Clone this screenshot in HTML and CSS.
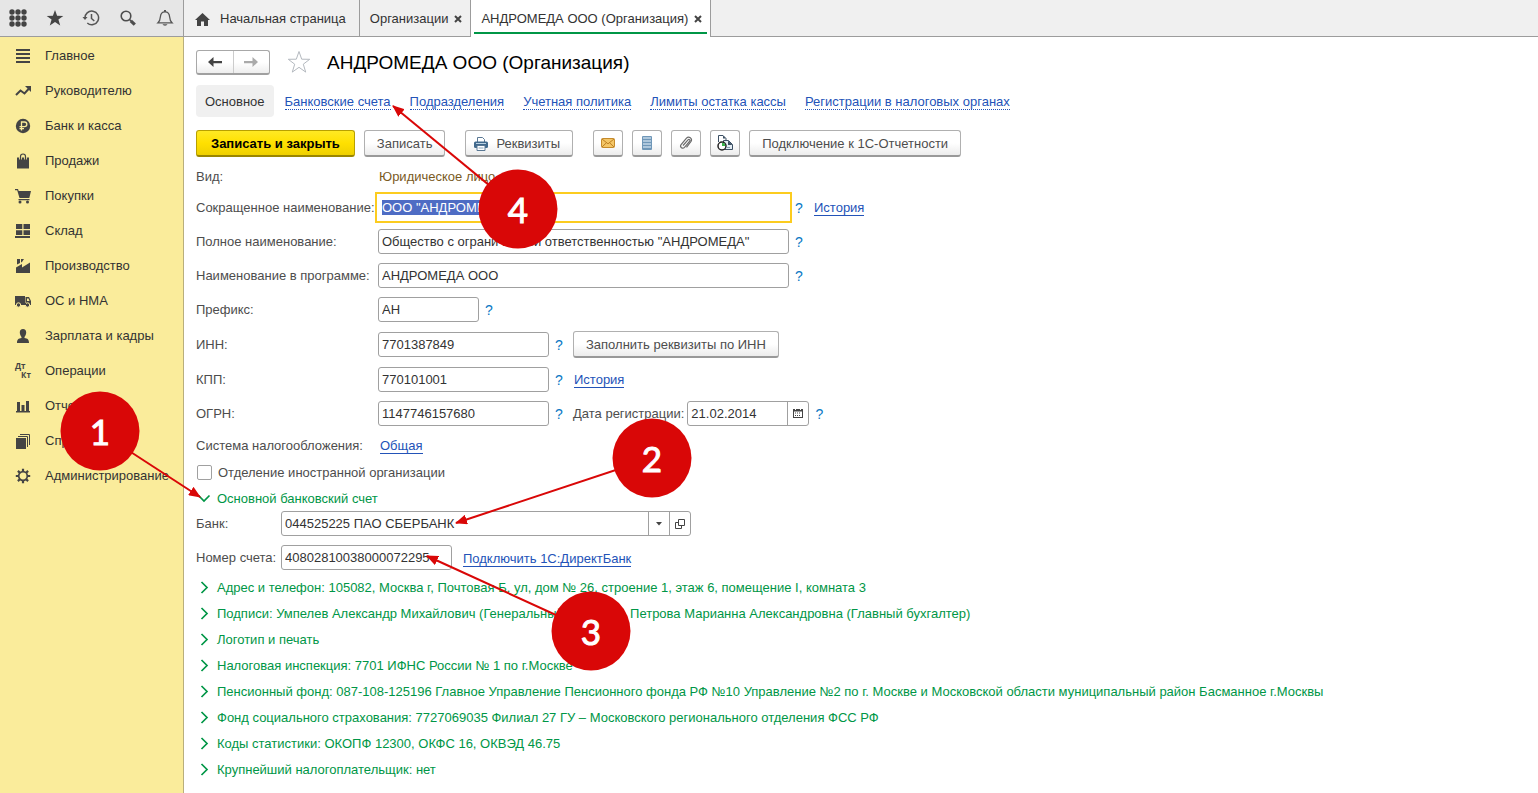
FILE: index.html
```html
<!DOCTYPE html>
<html lang="ru">
<head>
<meta charset="utf-8">
<meta name="viewport" content="width=device-width, initial-scale=1">
<title>АНДРОМЕДА ООО (Организация)</title>
<link rel="stylesheet" href="styles.css">
</head>
<body>
<div class="app">
  <header class="topbar">
    <div class="tools">
      <button class="tool" aria-label="Меню"><svg width="18" height="18" viewBox="0 0 18 18" fill="#444"><circle cx="3" cy="3" r="2.7"/><circle cx="9" cy="3" r="2.7"/><circle cx="15" cy="3" r="2.7"/><circle cx="3" cy="9" r="2.7"/><circle cx="9" cy="9" r="2.7"/><circle cx="15" cy="9" r="2.7"/><circle cx="3" cy="15" r="2.7"/><circle cx="9" cy="15" r="2.7"/><circle cx="15" cy="15" r="2.7"/></svg></button>
      <button class="tool" aria-label="Избранное"><svg width="18" height="18" viewBox="0 0 18 18" fill="#444"><path d="M9 1l2.1 5.700 6.200.2-4.900 3.700 1.800 5.900L9 13l-5.200 3.500 1.800-5.900L.7 6.900l6.200-.2z"/></svg></button>
      <button class="tool" aria-label="История"><svg width="18" height="18" viewBox="0 0 18 18" fill="none" stroke="#555" stroke-width="1.500"><path d="M3 9.500A6.800 6.800 0 1 1 5.300 14"/><path d="M9.500 5v4.500l2.800 2.500"/><path d="M.5 8h5L3 11z" fill="#555" stroke="none"/></svg></button>
      <button class="tool" aria-label="Поиск"><svg width="18" height="18" viewBox="0 0 18 18" fill="none" stroke="#4d4d4d"><circle cx="7" cy="7" r="4.800" stroke-width="1.600"/><path d="M10.500 10.500l1.500 1.500" stroke-width="1.600"/><path d="M11.800 11.800l4 3.800" stroke-width="3.200"/></svg></button>
      <button class="tool" aria-label="Уведомления"><svg width="18" height="18" viewBox="0 0 18 18" fill="none" stroke="#555" stroke-width="1.300"><path d="M2 13.800c2-1.800 2.200-3.300 2.400-6C4.600 4.600 6.300 2.800 9 2.800s4.400 1.800 4.600 5c.2 2.700.4 4.200 2.400 6z"/><path d="M9 1v2" stroke-width="2"/><path d="M6.500 15.200a2.600 2 0 0 0 5 0z" fill="#555" stroke="none"/></svg></button>
    </div>
    <nav class="tabs" aria-label="Открытые окна">
      <a class="tab tab-home" href="#"><svg width="15" height="13" viewBox="0 0 15 13" fill="#444"><path d="M7.500 0L15 7h-2v6H9V8.500H6V13H2V7H0z"/></svg>Начальная страница</a>
      <div class="tab"><a href="#">Организации</a><button class="close" aria-label="Закрыть Организации"><svg width="8" height="8" viewBox="0 0 8 8"><path d="M1 1l6 6M7 1L1 7"/></svg></button></div>
      <div class="tab tab-active"><a href="#">АНДРОМЕДА ООО (Организация)</a><button class="close" aria-label="Закрыть АНДРОМЕДА"><svg width="8" height="8" viewBox="0 0 8 8"><path d="M1 1l6 6M7 1L1 7"/></svg></button></div>
    </nav>
  </header>

  <div class="body">
    <nav class="sidebar" aria-label="Разделы">
      <a href="#"><svg viewBox="0 0 16 16"><path d="M1 1h14v2H1zM1 5h14v2H1zM1 9h14v2H1zM1 13h14v2H1z"/></svg>Главное</a>
      <a href="#"><svg viewBox="0 0 16 16"><path d="M1 12l4.500-4.500 4 3L14 5.500" fill="none" stroke="#444" stroke-width="2"/><path d="M10 3h6v6z"/></svg>Руководителю</a>
      <a href="#"><svg viewBox="0 0 16 16"><circle cx="8" cy="8" r="7.200"/><path d="M6.500 12.500V4H9.500a2.300 2.300 0 0 1 0 4.700H4.500M4.500 10.700H9" fill="none" stroke="#faec9b" stroke-width="1.300"/></svg>Банк и касса</a>
      <a href="#"><svg viewBox="0 0 16 16"><path d="M2 4.500h12v11H2z"/><path d="M5.500 6.500V3.500Q5.500 1 8 1t2.500 2.500v3" fill="none" stroke="#faec9b" stroke-width="2.800"/><path d="M5.500 7V3.500Q5.500 1 8 1t2.500 2.500V7" fill="none" stroke="#444" stroke-width="1.200"/></svg>Продажи</a>
      <a href="#"><svg viewBox="0 0 16 16"><path d="M0 1h3l.7 2H16l-1.700 7H4.500L2.200 2.200H0zM3.500 11h11v1.300h-11z"/><circle cx="5" cy="14" r="1.500"/><circle cx="12.500" cy="14" r="1.500"/></svg>Покупки</a>
      <a href="#"><svg viewBox="0 0 16 16"><path d="M1 1h6.300v5H1zM8.500 1h6.500v5H8.500zM1 7.200h6.300v4.800H1zM8.500 7.200h6.500v4.800H8.500zM0 13h15v2H0z"/></svg>Склад</a>
      <a href="#"><svg viewBox="0 0 16 16"><path d="M1 15V9.500L7 6v3.500L15 4.500V15z"/><path d="M2 1h3v4L2 6.500zM6 1h3L7 4 6 4.500z"/></svg>Производство</a>
      <a href="#"><svg viewBox="0 0 16 16"><path d="M0 3h10v9H0zM10.500 4H14l2 4v4h-5.500z"/><path d="M12 5.500h1.500l1 2.500H12z" fill="#faec9b"/><circle cx="3.500" cy="12" r="2.200" stroke="#faec9b"/><circle cx="12.500" cy="12" r="2.200" stroke="#faec9b"/><path d="M9 10h2v2H9z"/></svg>ОС и НМА</a>
      <a href="#"><svg viewBox="0 0 16 16"><path d="M8 1c2.200 0 3.200 1.500 3.200 3.500S10 8.500 9.500 9v1c3 .3 4.500 1.500 4.500 5H2c0-3.500 1.500-4.700 4.500-5V9C6 8.500 4.800 6.500 4.800 4.500S5.800 1 8 1z"/></svg>Зарплата и кадры</a>
      <a href="#"><svg viewBox="0 0 16 16" class="dtkt"><text x="0" y="6">Дт</text><text x="6" y="15">Кт</text></svg>Операции</a>
      <a href="#"><svg viewBox="0 0 16 16"><path d="M1 13h14v1.500H1zM2 4h3v9H2zM6.500 7h3v6h-3zM11 3h3v10h-3z"/></svg>Отчеты</a>
      <a href="#"><svg viewBox="0 0 16 16"><path d="M1 5h10v11H1z"/><path d="M3 3.500h9.500V14M5 1.500h9.500V12" fill="none" stroke="#444"/></svg>Справочники</a>
      <a href="#"><svg viewBox="0 0 16 16" fill="none" stroke="#444"><circle cx="8" cy="8" r="4.300" fill="none" stroke-width="1.700"/><path d="M8 .8v2.700M8 12.500v2.700M.8 8h2.700M12.500 8h2.700M2.900 2.900l1.900 1.900M11.200 11.200l1.900 1.900M2.900 13.100l1.900-1.900M11.200 4.800l1.900-1.900" stroke-width="2.200"/></svg>Администрирование</a>
    </nav>

    <main class="content">
      <div class="heading">
        <div class="history-nav">
          <button aria-label="Назад"><svg width="14" height="10" viewBox="0 0 14 10"><path d="M0 5l5.500-5v4H14v2.200H5.500V10z" fill="#444"/></svg></button>
          <button aria-label="Вперед"><svg width="14" height="10" viewBox="0 0 14 10"><path d="M14 5L8.500 0v4H0v2.200h8.500V10z" fill="#aaa"/></svg></button>
        </div>
        <button class="fav" aria-label="В избранное"><svg width="24" height="24" viewBox="0 0 24 24" fill="none" stroke="#b4b9bf"><path d="M12 1.500l2.700 7.700 8 .1-6.400 4.900 2.400 7.900-6.700-4.800-6.700 4.800 2.400-7.900L1.300 9.300l8-.1z"/></svg></button>
        <h1>АНДРОМЕДА ООО (Организация)</h1>
      </div>

      <nav class="subnav" aria-label="Разделы организации">
        <span class="current">Основное</span>
        <div class="sublinks">
          <a href="#">Банковские счета</a>
          <a href="#">Подразделения</a>
          <a href="#">Учетная политика</a>
          <a href="#">Лимиты остатка кассы</a>
          <a href="#">Регистрации в налоговых органах</a>
        </div>
      </nav>

      <div class="commands">
        <div class="group">
          <button class="btn primary">Записать и закрыть</button>
          <button class="btn">Записать</button>
        </div>
        <button class="btn with-icon"><svg width="14" height="14" viewBox="0 0 14 14"><path d="M3.500 5V.5h5l2 2V5" fill="#fff" stroke="#5a7894"/><rect y="4.500" width="14" height="6.500" rx="1.500" fill="#41698c"/><path d="M2 6.500h10" stroke="#b9d0e2"/><path d="M3 8.500h8v5H3z" fill="#fff" stroke="#5a7894"/><path d="M4.500 11h5" stroke="#8aa5bb"/></svg>Реквизиты</button>
        <div class="group">
          <button class="btn icon" aria-label="Письмо"><svg width="14" height="10" viewBox="0 0 14 10"><rect x=".5" y=".5" width="13" height="9" rx="1" fill="#f4c667" stroke="#c58a2b"/><path d="M1 1l6 4.800L13 1M1 9l4.500-4.300M13 9L8.500 4.700" fill="none" stroke="#bd7f21"/></svg></button>
          <button class="btn icon" aria-label="Список"><svg width="10" height="14" viewBox="0 0 10 14"><rect width="10" height="14" rx="1" fill="#6f97b8"/><path d="M1 2h8M1 5h8M1 8h8M1 11h8" stroke="#c3d8e8" stroke-width="1.500"/></svg></button>
          <button class="btn icon" aria-label="Присоединенные файлы"><svg width="14" height="14" viewBox="0 0 14 14" fill="none" stroke="#6b6b6b" stroke-width="1.200"><path d="M4 9.500l5-5.700c1-1 2.600.2 1.700 1.400l-5.200 6.200c-1.800 2-5.200-.3-3.400-2.800L7.500 2.200c2.300-2.600 6.300.3 4.500 3.300L7.500 11.300"/></svg></button>
          <button class="btn icon" aria-label="История документов"><svg width="16" height="16" viewBox="0 0 16 16"><path d="M1.500 7V.5h4.500l3 3V13" fill="#fff" stroke="#3c5064"/><path d="M6.500 5.500h5l4 4v5h-9z" fill="#e4edf4" stroke="#3c5064"/><path d="M11 5.500V10h4.500zM6 .5v3h3z" fill="#3c5064"/><circle cx="5" cy="11" r="4" fill="#fff" stroke="#222" stroke-width="1.500"/><path d="M5 11V7.800A3.200 3.200 0 0 1 8.200 11z" fill="#35b44a"/><path d="M9 12.500h4" stroke="#8ba0b2"/></svg></button>
          <button class="btn">Подключение к 1С-Отчетности</button>
        </div>
      </div>

      <form class="form">
        <div class="row row-kind"><span class="label">Вид:</span><span class="kind">Юридическое лицо</span></div>
        <div class="row"><label class="label" for="short">Сокращенное наименование:</label><input class="field wide focus" id="short" value='ООО "АНДРОМЕДА"'><button type="button" class="help">?</button><a class="link" href="#">История</a></div>
        <div class="row"><label class="label" for="full">Полное наименование:</label><input class="field wide" id="full" value='Общество с ограниченной ответственностью "АНДРОМЕДА"'><button type="button" class="help">?</button></div>
        <div class="row"><label class="label" for="name">Наименование в программе:</label><input class="field wide" id="name" value="АНДРОМЕДА ООО"><button type="button" class="help">?</button></div>
        <div class="row"><label class="label" for="prefix">Префикс:</label><input class="field tiny" id="prefix" value="АН"><button type="button" class="help">?</button></div>
        <div class="row row-inn"><label class="label" for="inn">ИНН:</label><input class="field mid" id="inn" value="7701387849"><button type="button" class="help">?</button><button type="button" class="btn">Заполнить реквизиты по ИНН</button></div>
        <div class="row"><label class="label" for="kpp">КПП:</label><input class="field mid" id="kpp" value="770101001"><button type="button" class="help">?</button><a class="link" href="#">История</a></div>
        <div class="row"><label class="label" for="ogrn">ОГРН:</label><input class="field mid" id="ogrn" value="1147746157680"><button type="button" class="help">?</button><label class="date-label" for="regdate">Дата регистрации:</label><span class="combo date"><input id="regdate" value="21.02.2014"><button type="button" aria-label="Календарь"><svg width="10" height="10" viewBox="0 0 10 10"><path d="M0 1h10v9H0z" fill="#444"/><path d="M1 3.500h8V9H1z" fill="#fff"/><path d="M2 5h6M2 7.500h6" stroke="#444" stroke-dasharray="1 1"/><path d="M2.500 0v2M7.500 0v2" stroke="#fff"/></svg></button></span><button type="button" class="help">?</button></div>
        <div class="row row-tax"><span class="label">Система налогообложения:</span><a class="link tax" href="#">Общая</a></div>
        <label class="check"><input type="checkbox"><span>Отделение иностранной организации</span></label>

        <button type="button" class="section open" aria-expanded="true"><svg width="14" height="14" viewBox="0 0 14 14"><path d="M1.500 4.500l5.500 5.500 5.500-5.500"/></svg><span>Основной банковский счет</span></button>
        <div class="account">
          <div class="account-row"><label for="bank">Банк:</label><span class="combo bank"><input id="bank" value="044525225 ПАО СБЕРБАНК"><button type="button" aria-label="Выбрать"><svg width="6" height="4" viewBox="0 0 6 4"><path d="M0 0h6L3 3.500z" fill="#444"/></svg></button><button type="button" aria-label="Открыть"><svg width="10" height="10" viewBox="0 0 10 10" fill="none" stroke="#444"><path d="M3.500.5h6v6h-6z"/><path d="M3.500 3.500h-3v6h6v-3"/></svg></button></span></div>
          <div class="account-row"><label for="acc">Номер счета:</label><input class="field mid" id="acc" value="40802810038000072295"><a class="link direct" href="#">Подключить 1С:ДиректБанк</a></div>
        </div>

        <button type="button" class="section"><svg width="14" height="14" viewBox="0 0 14 14"><path d="M4.500 2L10 7.500 4.500 13"/></svg><span>Адрес и телефон: 105082, Москва г, Почтовая Б. ул, дом № 26, строение 1, этаж 6, помещение I, комната 3</span></button>
        <button type="button" class="section"><svg width="14" height="14" viewBox="0 0 14 14"><path d="M4.500 2L10 7.500 4.500 13"/></svg><span>Подписи: Умпелев Александр Михайлович (Генеральный директор&nbsp; Петрова Марианна Александровна (Главный бухгалтер)</span></button>
        <button type="button" class="section"><svg width="14" height="14" viewBox="0 0 14 14"><path d="M4.500 2L10 7.500 4.500 13"/></svg><span>Логотип и печать</span></button>
        <button type="button" class="section"><svg width="14" height="14" viewBox="0 0 14 14"><path d="M4.500 2L10 7.500 4.500 13"/></svg><span>Налоговая инспекция: 7701 ИФНС России № 1 по г.Москве</span></button>
        <button type="button" class="section"><svg width="14" height="14" viewBox="0 0 14 14"><path d="M4.500 2L10 7.500 4.500 13"/></svg><span>Пенсионный фонд: 087-108-125196 Главное Управление Пенсионного фонда РФ №10 Управление №2 по г. Москве и Московской области муниципальный район Басманное г.Москвы</span></button>
        <button type="button" class="section"><svg width="14" height="14" viewBox="0 0 14 14"><path d="M4.500 2L10 7.500 4.500 13"/></svg><span>Фонд социального страхования: 7727069035 Филиал 27 ГУ – Московского регионального отделения ФСС РФ</span></button>
        <button type="button" class="section"><svg width="14" height="14" viewBox="0 0 14 14"><path d="M4.500 2L10 7.500 4.500 13"/></svg><span>Коды статистики: ОКОПФ 12300, ОКФС 16, ОКВЭД 46.75</span></button>
        <button type="button" class="section"><svg width="14" height="14" viewBox="0 0 14 14"><path d="M4.500 2L10 7.500 4.500 13"/></svg><span>Крупнейший налогоплательщик: нет</span></button>
      </form>
    </main>
  </div>

  <svg class="callouts" width="720" height="690" viewBox="0 0 720 690">
    <defs><marker id="head" viewBox="0 0 12 10" refX="11" refY="5" markerWidth="12" markerHeight="10" markerUnits="userSpaceOnUse" orient="auto"><path d="M0 0l12 5-12 5z" fill="#d90707"/></marker></defs>
    <g stroke="#d90707" stroke-width="2" marker-end="url(#head)">
      <path d="M100 432L200 497"/>
      <path d="M652 458L456 523"/>
      <path d="M591 631L427 556"/>
      <path d="M518 209L393 106"/>
    </g>
    <g fill="#d90707">
      <circle cx="100" cy="431" r="39.500"/><circle cx="652" cy="458" r="39.500"/><circle cx="591" cy="631" r="39.500"/><circle cx="518" cy="209" r="39.500"/>
    </g>
    <g class="numbers">
      <text x="100" y="445">1</text><text x="652" y="472">2</text><text x="591" y="645">3</text><text x="518" y="223">4</text>
    </g>
  </svg>
</div>
<script src="script.js"></script>
</body>
</html>
```
FILE: styles.css
```css
* { box-sizing: border-box; }
body { margin: 0; background: #fff; color: #4d4d4d; font: 13px/16px "Liberation Sans", Arial, sans-serif; }
button, input { font: inherit; color: inherit; }
button { padding: 0; border: 0; background: none; cursor: pointer; }
svg { flex: none; }
a { color: inherit; text-decoration: none; }
.app { position: relative; display: flex; flex-direction: column; min-height: 100vh; }

.topbar { display: flex; height: 37px; border-bottom: 1px solid #9c9c9c; background: #f0f0f0; }
.tools { display: flex; align-items: center; width: 184px; background: #e6e6e6; border-right: 1px solid #9c9c9c; }
.tool { display: flex; justify-content: center; width: 37px; }
.tabs { display: flex; color: #333; }
.tab { display: flex; align-items: center; gap: 6px; padding: 2px 8px 0 10px; border-right: 1px solid #9c9c9c; white-space: nowrap; }
.tab-home { gap: 10px; padding: 2px 13px 0 11px; }
.tab-active { position: relative; margin-bottom: -1px; padding-bottom: 1px; background: #fff; }
.tab-active::after { content: ""; position: absolute; left: 3px; right: 3px; bottom: 3px; height: 2px; background: #009646; }
.close { display: flex; }
.close path { stroke: #444; stroke-width: 2; }

.body { display: flex; flex: 1; }
.sidebar { flex: none; width: 184px; padding-top: 1px; background: #faec9b; border-right: 1px solid #b9af7c; color: #333; }
.sidebar a { display: flex; align-items: center; gap: 14px; height: 35px; padding-left: 15px; white-space: nowrap; }
.sidebar svg { width: 16px; height: 16px; fill: #444; overflow: visible; }
.dtkt text { font: bold 8px "Open Sans", sans-serif; }

.content { flex: 1; min-width: 0; padding: 12px 12px 0; }
.heading { display: flex; align-items: center; height: 26px; }
.history-nav { display: flex; width: 74px; height: 25px; border: 1px solid #a8a8a8; border-bottom: 2px solid #a0a0a0; border-radius: 3px; background: linear-gradient(#fff 50%, #eee); }
.history-nav button { display: flex; flex: 1; align-items: center; justify-content: center; }
.history-nav button + button { border-left: 1px solid #ccc; }
.fav { display: flex; margin: 0 16px 0 17px; }
h1 { margin: 0; padding-top: 2px; color: #000; font-size: 19px; line-height: 24px; font-weight: normal; white-space: nowrap; }

.subnav { display: flex; align-items: center; gap: 11px; height: 32px; margin-top: 10px; white-space: nowrap; }
.current { padding: 9px 9px 7px; border-radius: 4px; background: #f0f0f0; color: #333; }
.sublinks { display: flex; gap: 19px; padding-top: 2px; color: #2353b8; }
.sublinks a { line-height: 14px; border-bottom: 1px dotted #2353b8; }

.commands { display: flex; gap: 20px; margin-top: 13px; }
.group { display: flex; gap: 9px; }
.btn { display: flex; align-items: center; justify-content: center; height: 27px; padding: 2px 12px 0; border: 1px solid #b0b0b0; border-bottom: 2px solid #999; border-radius: 3px; background: linear-gradient(#fff 50%, #ececec); white-space: nowrap; }
.primary { padding: 2px 14px 0; border-color: #b8a000; border-bottom-color: #9a8600; background: linear-gradient(#ffe924, #ffe000 50%, #efd000); color: #000; font-weight: bold; }
.with-icon { gap: 8px; padding: 2px 12px 0 8px; }
.icon { width: 30px; padding: 0; }

.form { white-space: nowrap; }
.row { display: flex; align-items: center; height: 34px; }
.row-kind { height: 26px; margin-top: 6px; margin-bottom: 1px; }
.row-inn { height: 36px; }
.row-tax { height: 29px; }
.label, .kind, .help, .date-label, .link { padding-top: 2px; }
.label { flex: none; width: 182px; }
.kind { padding-left: 1px; color: #7a5a1e; }
.row .link { margin-left: 1px; }
.row .tax { margin-left: 2px; }
.field, .combo { height: 25px; border: 1px solid #a0a0a0; border-radius: 3px; background: #fff; color: #333; }
.field { padding: 0 3px; }
.wide { width: 411px; }
.mid { width: 171px; }
.tiny { width: 101px; }
.focus { border-color: #fff; outline: 2px solid #fccc1f; outline-offset: 1px; border-radius: 0; }
.focus::selection { background: #4e6cc4; color: #fff; }
.help { width: 20px; margin-right: 4px; color: #0a78c4; font-size: 14px; }
.link { color: #2353b8; line-height: 15px; border-bottom: 1px solid #2353b8; }
.date-label { margin-right: 3px; }
.combo { display: flex; }
.combo input { flex: 1; min-width: 0; padding: 1px 3px 0; border: 0; background: none; outline: 0; }
.combo button { display: flex; align-items: center; justify-content: center; width: 21px; border-left: 1px solid #a0a0a0; }
.date { width: 122px; }
.bank { width: 410px; }

.check { display: flex; align-items: center; gap: 6px; height: 26px; }
.check input { appearance: none; width: 15px; height: 15px; margin: 0 0 0 1px; border: 1px solid #a0a0a0; border-radius: 2px; background: #fff; }
.check span, .section span { padding-top: 2px; }
.section { display: flex; align-items: center; gap: 6px; height: 26px; padding-left: 1px; color: #009646; }
.section path { fill: none; stroke: #009646; stroke-width: 1.700; }
.account { display: grid; gap: 9px; padding-bottom: 4px; }
.account-row { display: flex; align-items: center; height: 25px; }
.account-row label { width: 85px; }
.direct { margin-left: 11px; }

.callouts { position: absolute; top: 0; left: 0; pointer-events: none; }
.numbers { fill: #fff; stroke: #fff; stroke-width: 1; font: 35px Lato, "Open Sans", sans-serif; text-anchor: middle; }
```
FILE: script.js
```js
const shortName = document.getElementById("short");
shortName.focus({ preventScroll: true });
shortName.select();
```
